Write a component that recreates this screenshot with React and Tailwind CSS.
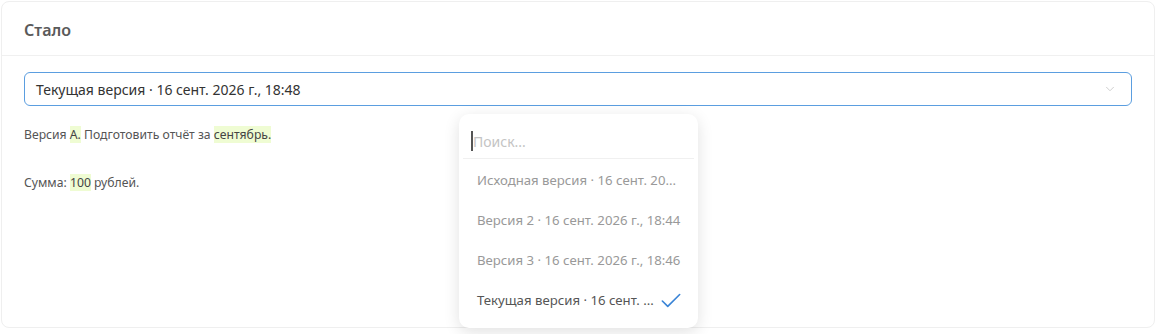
import { ChevronDown, Check } from 'lucide-react';

const versions = [
    { id: 'orig', label: 'Исходная версия · 16 сент. 20...' },
    { id: 'v2', label: 'Версия 2 · 16 сент. 2026 г., 18:44' },
    { id: 'v3', label: 'Версия 3 · 16 сент. 2026 г., 18:46' },
    { id: 'cur', label: 'Текущая версия · 16 сент. ...', selected: true },
];

const Mark = ({ children }) => (
    <span className="bg-[#effcd3] text-[#444]">{children}</span>
);

export default function App() {
    return (
        <div className="w-[1156px] h-[334px] bg-white p-px" style={{ fontFamily: '"Noto Sans", "Open Sans", sans-serif' }}>
            <div className="relative h-[327px] rounded-lg border border-[#efefef] bg-white">
                {/* header */}
                <div className="h-[54px] px-[22px] pt-[2px] flex items-center border-b border-[#f0f0f0]">
                    <h2 className="text-[16px] font-semibold text-[#5a5a5a]">Стало</h2>
                </div>

                <div className="px-[22px] pt-[16px]">
                    {/* select */}
                    <div className="h-[34px] rounded-md border border-[#5b9ee0] flex items-center pl-[11px] pr-[14px]">
                        <span className="flex-1 text-[14px] text-[#333]">Текущая версия · 16 сент. 2026 г., 18:48</span>
                        <ChevronDown className="w-[14px] h-[14px] text-[#c8c8c8]" strokeWidth={1.5} />
                    </div>

                    <div className="pt-[20px] text-[12.2px] text-[#555] leading-[18px]">
                        <p>Версия <Mark>А.</Mark> Подготовить отчёт за <Mark>сентябрь.</Mark></p>
                        <p className="mt-[30px]">Сумма: <Mark>100</Mark> рублей.</p>
                    </div>
                </div>

                {/* dropdown */}
                <div className="absolute left-[457px] top-[112px] w-[239px] h-[214px] rounded-[10px] bg-white shadow-[0_4px_16px_rgba(0,0,0,0.12)]">
                    <div className="mx-[4px] h-[45px] pl-[8px] pt-[10px] flex items-center border-b border-[#f0f0f0]">
                        <span className="w-[2px] h-[20px] bg-[#555]" />
                        <span className="text-[14px] text-[#c4c4c4]">Поиск...</span>
                    </div>
                    <ul className="pt-[2px]">
                        {versions.map(v => (
                            <li key={v.id}
                                className={`h-[40px] pl-[18px] pr-[18px] flex items-center justify-between text-[13.2px] ${v.selected ? 'text-[#555]' : 'text-[#999]'}`}>
                                <span className="whitespace-nowrap">{v.label}</span>
                                {v.selected && <Check className="w-[26px] h-[26px] text-[#3a84d6] -mr-[4px]" strokeWidth={1.5} />}
                            </li>
                        ))}
                    </ul>
                </div>
            </div>
        </div>
    );
}
